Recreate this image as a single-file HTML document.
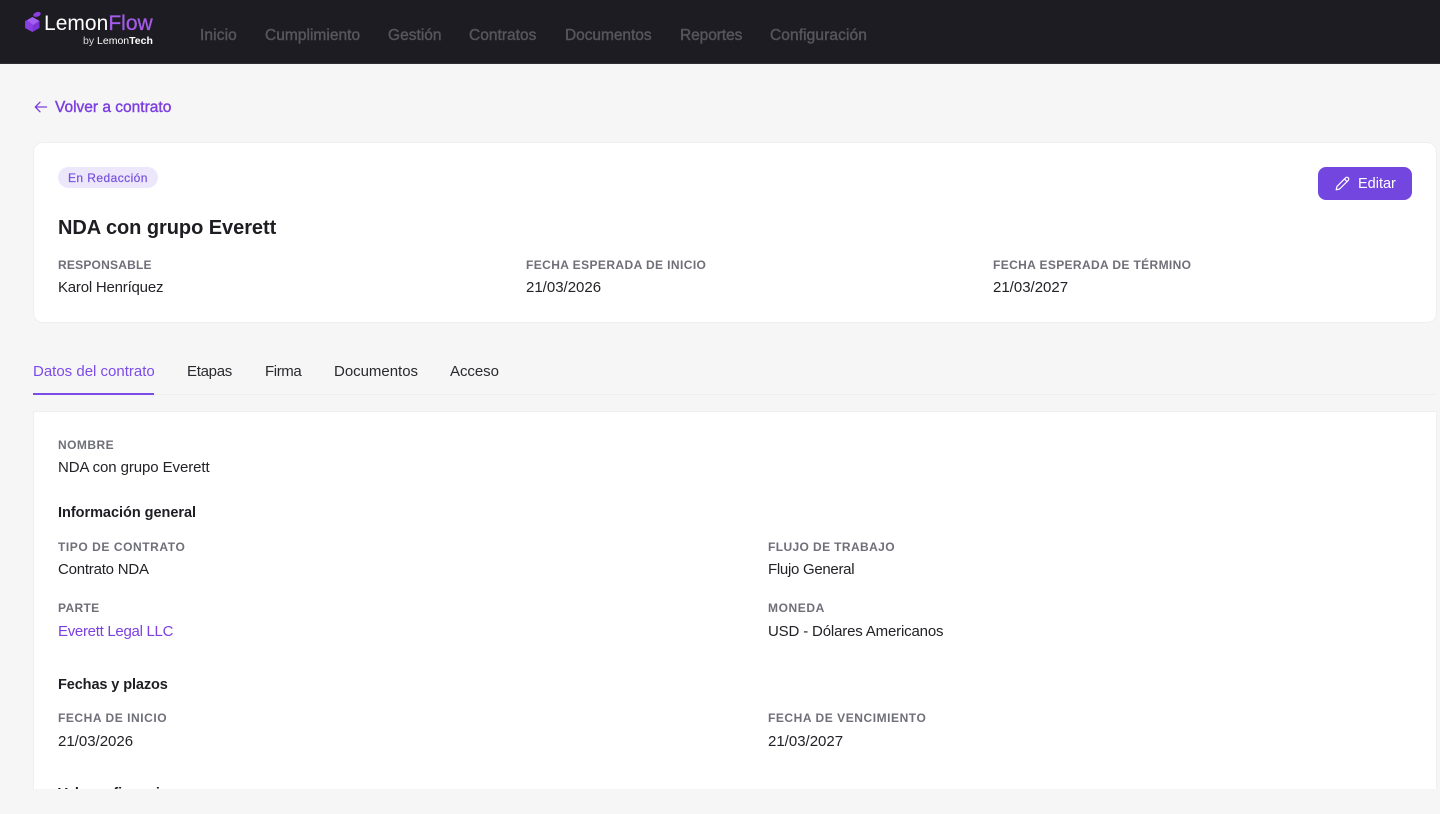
<!DOCTYPE html>
<html lang="es">
<head>
<meta charset="utf-8">
<title>LemonFlow</title>
<style>
html,body{margin:0;padding:0;width:1440px;height:814px;overflow:hidden;background:#f6f6f6;font-family:"Liberation Sans",Arial,sans-serif;}
.abs,.t{position:absolute}
.t{white-space:nowrap;line-height:20px;height:20px;}
.hdr{left:0;top:0;width:1440px;height:64px;background:#1c1c22;border-bottom:1px solid #2c2c31;box-sizing:border-box}
.nav{top:26px;font-size:15.5px;color:#56565c;-webkit-text-stroke:.4px #56565c}
.lab{font-size:12px;font-weight:700;color:#6f6f79;letter-spacing:.42px}
.val{font-size:15px;color:#222227;letter-spacing:-.14px}
.sec{font-size:14.5px;font-weight:700;color:#1d1d22;letter-spacing:-.03px}
.tab{top:362px;font-size:15px;color:#29292e;letter-spacing:-.12px}
.card{background:#fff;border:1px solid #efeff1;box-sizing:border-box}
</style>
</head>
<body>
<div class="abs hdr"></div>
<svg class="abs" style="left:24px;top:11px" width="18" height="22" viewBox="0 0 18 22">
  <ellipse cx="13" cy="3.4" rx="3.9" ry="2.3" fill="#8b3fe0" transform="rotate(-18 13 3.4)"/>
  <path d="M8.5 6 L15.5 10 L15.5 17 L8.5 21 L1.2 17 L1.2 10 Z" fill="#7b35d6"/>
  <path d="M8.5 6 L15.5 10 L9 14 L3 9.2 Z" fill="#a45ff0"/>
  <path d="M1.2 10 L3 9.2 L9 14 L8.5 21 L1.2 17 Z" fill="#8a3fe2"/>
</svg>
<div class="t" style="left:44px;top:14px;font-size:21px;color:#fff;letter-spacing:.02px">Lemon<span style="color:#a45be8;-webkit-text-stroke:.3px #a45be8">Flow</span></div>
<div class="t" style="left:83px;top:31px;font-size:10.5px;color:#d8d8da">by <span style="color:#fff">Lemon</span><span style="color:#fff;font-weight:700">Tech</span></div>

<div class="t nav" style="left:200px;letter-spacing:.12px">Inicio</div>
<div class="t nav" style="left:265px;letter-spacing:.03px">Cumplimiento</div>
<div class="t nav" style="left:388px;letter-spacing:.02px">Gestión</div>
<div class="t nav" style="left:469px;letter-spacing:.02px">Contratos</div>
<div class="t nav" style="left:565px;letter-spacing:-.05px">Documentos</div>
<div class="t nav" style="left:680px;letter-spacing:-.07px">Reportes</div>
<div class="t nav" style="left:770px;letter-spacing:.1px">Configuración</div>

<svg class="abs" style="left:33px;top:98.5px" width="16" height="16" viewBox="0 0 16 16" fill="none" stroke="#7c3fe0" stroke-width="1.3" stroke-linecap="round" stroke-linejoin="round"><path d="M13.5 8H2.5M7 3.2 2.3 8 7 12.8"/></svg>
<div class="t" style="left:55px;top:98px;font-size:15.5px;color:#7c3fe0;-webkit-text-stroke:.4px #7c3fe0">Volver a contrato</div>

<div class="abs card" style="left:33px;top:142px;width:1404px;height:181px;border-radius:10px"></div>
<div class="abs" style="left:58px;top:167px;width:100px;height:21px;border-radius:11px;background:#ece7fb"></div>
<div class="t" style="left:68px;top:168px;font-size:12px;color:#7650e0;letter-spacing:.43px;-webkit-text-stroke:.2px #7650e0">En Redacción</div>
<div class="abs" style="left:1318px;top:167px;width:94px;height:33px;border-radius:8px;background:#7346e0"></div>
<svg class="abs" style="left:1334px;top:175px" width="17" height="17" viewBox="0 0 17 17" fill="none" stroke="#fff" stroke-width="1.2" stroke-linejoin="round"><path d="M2.2 14.8 L3 11.4 L11.6 2.8 C12.4 2 13.4 2 14.2 2.8 C15 3.6 15 4.6 14.2 5.4 L5.6 14 Z"/><path d="M10.4 4 L13 6.6"/></svg>
<div class="t" style="left:1358px;top:174px;font-size:14.5px;color:#fff">Editar</div>

<div class="t" style="left:58px;top:218px;font-size:20px;font-weight:700;color:#1d1d22;letter-spacing:-.05px">NDA con grupo Everett</div>

<div class="t lab" style="left:58px;top:255px;letter-spacing:.22px">RESPONSABLE</div>
<div class="t val" style="left:58px;top:278px;letter-spacing:-.21px">Karol Henríquez</div>
<div class="t lab" style="left:526px;top:255px;letter-spacing:.41px">FECHA ESPERADA DE INICIO</div>
<div class="t val" style="left:526px;top:278px;letter-spacing:0">21/03/2026</div>
<div class="t lab" style="left:993px;top:255px;letter-spacing:.37px">FECHA ESPERADA DE TÉRMINO</div>
<div class="t val" style="left:993px;top:278px;letter-spacing:0">21/03/2027</div>

<div class="abs" style="left:33px;top:394px;width:1404px;height:1px;background:#efeff1"></div>
<div class="abs" style="left:33px;top:393px;width:121px;height:2px;background:#7c4ce8"></div>
<div class="t tab" style="left:33px;color:#7c4ce8;letter-spacing:0">Datos del contrato</div>
<div class="t tab" style="left:187px;letter-spacing:-.29px">Etapas</div>
<div class="t tab" style="left:265px;letter-spacing:-.4px">Firma</div>
<div class="t tab" style="left:334px;letter-spacing:-.02px">Documentos</div>
<div class="t tab" style="left:450px;letter-spacing:-.05px">Acceso</div>

<div class="abs card" style="left:33px;top:411px;width:1404px;height:378px;border-bottom:0;overflow:hidden">
  <div class="t sec" style="left:24px;top:372px">Valores financieros</div>
</div>

<div class="t lab" style="left:58px;top:435px;letter-spacing:.45px">NOMBRE</div>
<div class="t val" style="left:58px;top:458px;letter-spacing:-.09px">NDA con grupo Everett</div>

<div class="t sec" style="left:58px;top:503px">Información general</div>
<div class="t lab" style="left:58px;top:537px;letter-spacing:.57px">TIPO DE CONTRATO</div>
<div class="t val" style="left:58px;top:560px;letter-spacing:-.22px">Contrato NDA</div>
<div class="t lab" style="left:768px;top:537px;letter-spacing:.39px">FLUJO DE TRABAJO</div>
<div class="t val" style="left:768px;top:560px;letter-spacing:-.29px">Flujo General</div>
<div class="t lab" style="left:58px;top:598px;letter-spacing:.35px">PARTE</div>
<div class="t val" style="left:58px;top:622px;color:#7c3fe0;letter-spacing:-.29px">Everett Legal LLC</div>
<div class="t lab" style="left:768px;top:598px;letter-spacing:.6px">MONEDA</div>
<div class="t val" style="left:768px;top:622px;letter-spacing:-.16px">USD - Dólares Americanos</div>

<div class="t sec" style="left:58px;top:675px;letter-spacing:-.1px">Fechas y plazos</div>
<div class="t lab" style="left:58px;top:708px;letter-spacing:.55px">FECHA DE INICIO</div>
<div class="t val" style="left:58px;top:732px;letter-spacing:0">21/03/2026</div>
<div class="t lab" style="left:768px;top:708px;letter-spacing:.55px">FECHA DE VENCIMIENTO</div>
<div class="t val" style="left:768px;top:732px;letter-spacing:0">21/03/2027</div>
</body>
</html>
